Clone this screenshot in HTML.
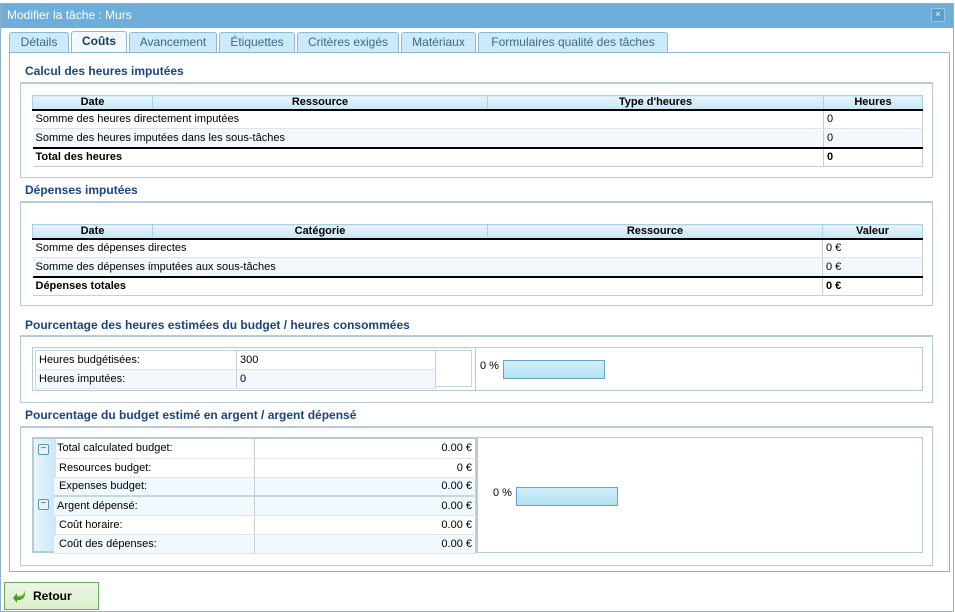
<!DOCTYPE html>
<html><head><meta charset="utf-8">
<style>
*{box-sizing:border-box;margin:0;padding:0}
body{width:955px;height:612px;overflow:hidden;background:#fff;font-family:"Liberation Sans",sans-serif;font-size:11px;color:#000;position:relative}
.a{position:absolute}
#dlg{left:0;top:3px;width:954px;height:609px;border:1px solid #8fb3cc;background:#fff}
#title{left:1px;top:4px;width:952px;height:24px;background:#6eaedb;color:#fff;font-size:12px;padding:4px 6px}
#close{left:931px;top:8px;width:14px;height:14px;background:#5d9ed0;border:1px solid #9cc6e6;border-radius:2px;color:#fff;font-size:9px;text-align:center;line-height:11px}
.tab{top:32px;height:21px;border:1px solid #8fb9d6;border-bottom:none;border-radius:3px 3px 0 0;background:#cdeaf8;color:#3b6990;font-size:12px;text-align:center;line-height:19px}
.tab.sel{background:#f1f9fd;color:#1a3a5a;font-weight:bold;top:31px;height:23px}
#panel{left:9px;top:52px;width:941px;height:520px;border:1px solid #8fb3cc;border-top:1px solid #8fb9d6;background:#fff}
.h{left:25px;font-weight:bold;color:#1a4480;font-size:12px}
.box{left:20px;width:913px;border:1px solid #b6cbd6;border-top:2px solid #b6cbd6}
table{border-collapse:collapse;position:absolute;font-size:11px}
th{background:linear-gradient(#e6f4fb,#c6e6f7);border:1px solid #b0cfe0;border-bottom:2px solid #000;height:14px;font-weight:bold;padding:0}
td{height:19px;padding:0 3px;border-right:1px solid #ccc;border-bottom:1px solid #e2e2e2}
tr.alt td{background:#f1f9fe}
tr.tot td{font-weight:bold;border-top:2px solid #000;border-bottom:1px solid #ccc}
.num{color:#000}
.bar{height:19px;border:1px solid #6f9fcf;background:linear-gradient(#cfeef9,#b2e2f4)}
.tree td{height:19px}
.pm{display:inline-block;width:11px;height:11px;border:1px solid #5c93c6;border-radius:2px;background:#e8f4fc;font-size:10px;line-height:7px;text-align:center;color:#2d5f92;vertical-align:middle}
#btn{left:4px;top:582px;width:95px;height:28px;border:1px solid #6cab5c;background:linear-gradient(#eef7e6,#d9eecb);font-weight:bold;font-size:12px;padding:6px 0 0 28px}
</style></head><body>
<div id="dlg" class="a"></div>
<div id="title" class="a">Modifier la tâche : Murs</div>
<div id="close" class="a">×</div>
<div class="a tab" style="left:9px;width:60px">Détails</div>
<div class="a tab sel" style="left:71px;width:56px">Coûts</div>
<div class="a tab" style="left:129px;width:88px">Avancement</div>
<div class="a tab" style="left:219px;width:76px">Étiquettes</div>
<div class="a tab" style="left:297px;width:102px">Critères exigés</div>
<div class="a tab" style="left:401px;width:75px">Matériaux</div>
<div class="a tab" style="left:478px;width:190px">Formulaires qualité des tâches</div>
<div id="panel" class="a"></div>

<div class="a h" style="top:64px">Calcul des heures imputées</div>
<div class="a box" style="top:82px;height:96px"></div>
<table style="left:32px;top:95px;width:891px">
<tr><th style="width:120px">Date</th><th style="width:335px">Ressource</th><th style="width:336px">Type d'heures</th><th>Heures</th></tr>
<tr><td colspan="3">Somme des heures directement imputées</td><td>0</td></tr>
<tr class="alt"><td colspan="3">Somme des heures imputées dans les sous-tâches</td><td>0</td></tr>
<tr class="tot"><td colspan="3">Total des heures</td><td>0</td></tr>
</table>

<div class="a h" style="top:183px">Dépenses imputées</div>
<div class="a box" style="top:201px;height:105px"></div>
<table style="left:32px;top:224px;width:891px">
<tr><th style="width:120px">Date</th><th style="width:335px">Catégorie</th><th style="width:335px">Ressource</th><th>Valeur</th></tr>
<tr><td colspan="3">Somme des dépenses directes</td><td>0 €</td></tr>
<tr class="alt"><td colspan="3">Somme des dépenses imputées aux sous-tâches</td><td>0 €</td></tr>
<tr class="tot"><td colspan="3">Dépenses totales</td><td>0 €</td></tr>
</table>

<div class="a h" style="top:318px">Pourcentage des heures estimées du budget / heures consommées</div>
<div class="a box" style="top:335px;height:68px"></div>
<div class="a" style="left:32px;top:347px;width:891px;height:44px;border:1px solid #b6cbd6"></div>
<div class="a" style="left:475px;top:347px;width:1px;height:44px;background:#b6cbd6"></div>
<table style="left:35px;top:350px;width:401px;border:1px solid #c6d6e0">
<tr><td style="width:201px;height:18px">Heures budgétisées:</td><td>300</td></tr>
<tr class="alt"><td style="height:18px">Heures imputées:</td><td>0</td></tr>
</table>
<div class="a" style="left:436px;top:350px;width:36px;height:37px;border:1px solid #c6d6e0;border-left:none"></div>
<div class="a" style="left:480px;top:360px">0 %</div>
<div class="a bar" style="left:503px;top:360px;width:102px"></div>

<div class="a h" style="top:408px">Pourcentage du budget estimé en argent / argent dépensé</div>
<div class="a box" style="top:426px;height:140px"></div>
<div class="a" style="left:32px;top:437px;width:891px;height:116px;border:1px solid #b6cbd6"></div>
<div class="a" style="left:32px;top:437px;width:446px;height:116px;border:2px solid #b6cbd6;background:linear-gradient(90deg,#e8f5fc,#c9e8f8) 0 0/22px 100% no-repeat"></div>
<table class="tree" style="left:54px;top:439px;width:422px">
<tr><td style="width:200px">Total calculated budget:</td><td style="text-align:right">0.00 €</td></tr>
<tr><td style="padding-left:5px">Resources budget:</td><td style="text-align:right">0 €</td></tr>
<tr class="alt"><td style="padding-left:5px">Expenses budget:</td><td style="text-align:right">0.00 €</td></tr>
<tr class="alt"><td style="border-top:2px solid #c6d6e0">Argent dépensé:</td><td style="text-align:right;border-top:2px solid #c6d6e0">0.00 €</td></tr>
<tr><td style="padding-left:5px">Coût horaire:</td><td style="text-align:right">0.00 €</td></tr>
<tr class="alt"><td style="padding-left:5px">Coût des dépenses:</td><td style="text-align:right">0.00 €</td></tr>
</table>
<div class="a" style="left:38px;top:443px"><span class="pm">−</span></div>
<div class="a" style="left:38px;top:498px"><span class="pm">−</span></div>
<div class="a" style="left:493px;top:487px">0 %</div>
<div class="a bar" style="left:516px;top:487px;width:102px"></div>

<div id="btn" class="a">Retour</div>
<svg class="a" style="left:12px;top:588px" width="16" height="18" viewBox="0 0 16 18"><path d="M13 3 C14 9 10 13 5 12 L5 15 L1 10 L5 5 L5 8 C9 9 12 7 13 3Z" fill="#4e9a2c"/><path d="M13 3 C12 7 9 9 5 8" stroke="#9bd36a" fill="none"/></svg>
</body></html>
